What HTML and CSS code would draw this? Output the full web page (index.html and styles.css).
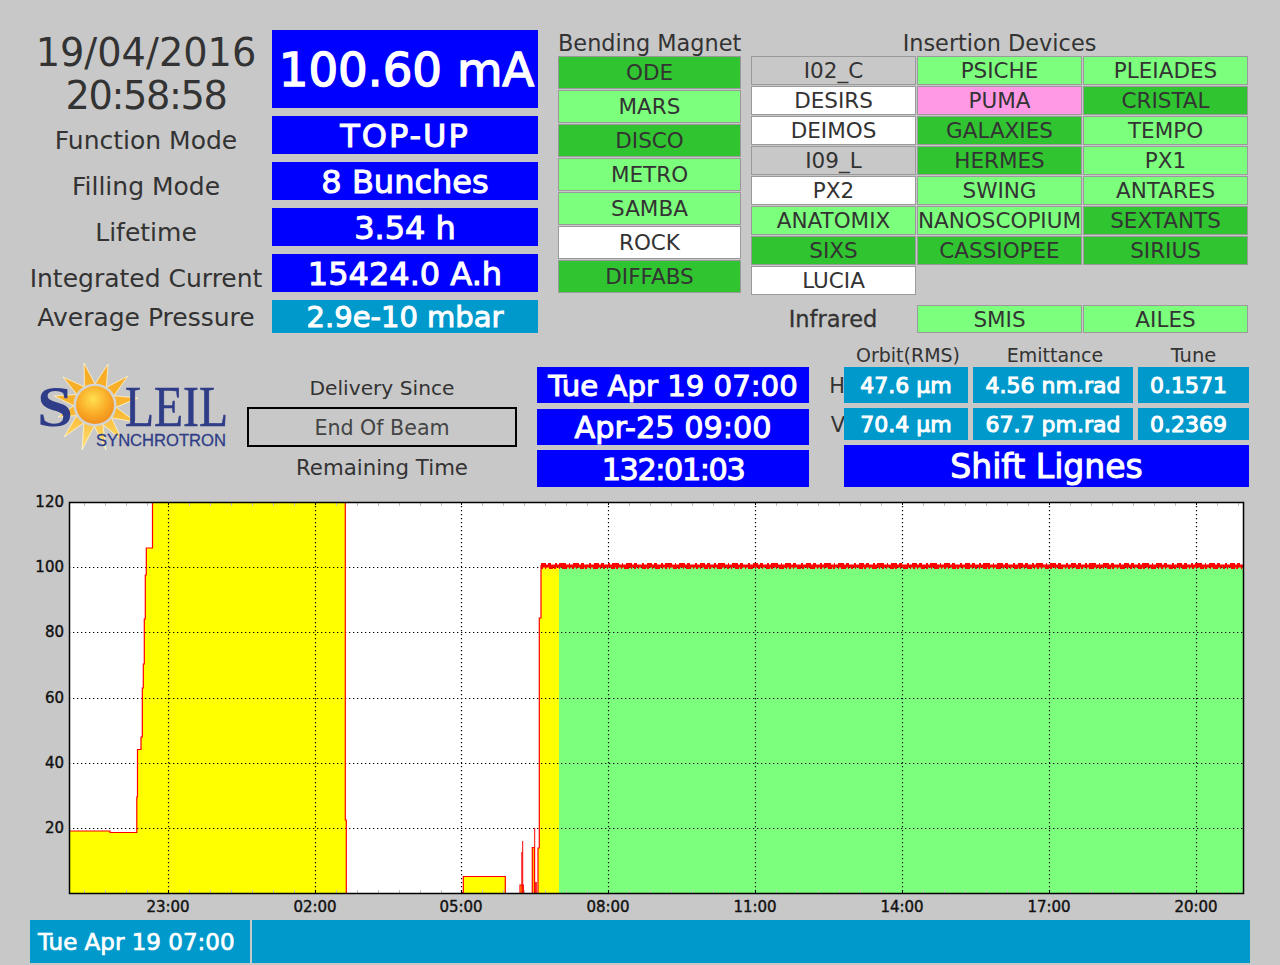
FILE: index.html
```html
<!DOCTYPE html>
<html lang="en">
<head>
<meta charset="utf-8">
<title>SOLEIL status</title>
<link rel="stylesheet" href="styles.css">
</head>
<body>
<main class="page">
  <section class="top">
    <div class="status">
      <div class="label clock"><span>19/04/2016</span><span class="clock-time">20:58:58</span></div>
      <div class="value beam">100.60 mA</div>
      <div class="label lower">Function Mode</div>
      <div class="value big wide">TOP-UP</div>
      <div class="label lower">Filling Mode</div>
      <div class="value big">8 Bunches</div>
      <div class="label lower">Lifetime</div>
      <div class="value big">3.54 h</div>
      <div class="label lower">Integrated Current</div>
      <div class="value big">15424.0 A.h</div>
      <div class="label low">Average Pressure</div>
      <div class="value pressure teal">2.9e-10 mbar</div>
    </div>
    <div class="bending">
      <div class="head">Bending Magnet</div>
      <div class="btn dark">ODE</div>
      <div class="btn light">MARS</div>
      <div class="btn dark">DISCO</div>
      <div class="btn light">METRO</div>
      <div class="btn light">SAMBA</div>
      <div class="btn white">ROCK</div>
      <div class="btn dark">DIFFABS</div>
    </div>
    <div class="insertion">
      <div class="head">Insertion Devices</div>
      <div class="idgrid">
        <div class="btn grey">I02_C</div>
        <div class="btn light">PSICHE</div>
        <div class="btn light">PLEIADES</div>
        <div class="btn white">DESIRS</div>
        <div class="btn pink">PUMA</div>
        <div class="btn dark">CRISTAL</div>
        <div class="btn white">DEIMOS</div>
        <div class="btn dark">GALAXIES</div>
        <div class="btn light">TEMPO</div>
        <div class="btn grey">I09_L</div>
        <div class="btn dark">HERMES</div>
        <div class="btn light">PX1</div>
        <div class="btn white">PX2</div>
        <div class="btn light">SWING</div>
        <div class="btn light">ANTARES</div>
        <div class="btn light">ANATOMIX</div>
        <div class="btn light">NANOSCOPIUM</div>
        <div class="btn dark">SEXTANTS</div>
        <div class="btn dark">SIXS</div>
        <div class="btn dark">CASSIOPEE</div>
        <div class="btn dark">SIRIUS</div>
        <div class="btn white">LUCIA</div>
      </div>
      <div class="irgrid">
        <div class="irlabel">Infrared</div>
        <div class="btn light">SMIS</div>
        <div class="btn light">AILES</div>
      </div>
    </div>
  </section>

  <section class="middle">
    <svg class="logo" viewBox="30 355 217 100" aria-label="SOLEIL Synchrotron">
      <defs>
        <radialGradient id="core" cx="0.45" cy="0.35" r="0.7">
          <stop offset="0" stop-color="#ffdf50"/>
          <stop offset="0.6" stop-color="#f9a825"/>
          <stop offset="1" stop-color="#ee8a1e"/>
        </radialGradient>
        <linearGradient id="rayfill" x1="0" y1="0" x2="0" y2="1">
          <stop offset="0" stop-color="#f8a924"/>
          <stop offset="0.55" stop-color="#f9b62e"/>
          <stop offset="1" stop-color="#fde27a"/>
        </linearGradient>
      </defs>
      <polygon class="rays" points="84,363 95,384 108,364 106.4,387.4 128,376 113.9,395.8 138,398 115.9,407.2 136,422 111.5,417.9 122,440 102.9,424.5 106,450 94.3,426 82,450 83.9,422.8 64,437 76.8,415.5 58,417 74,405.7 54,396 76.8,394.5 63,377 84.5,386.8"/>
      <circle class="ring" cx="95" cy="405" r="21.5"/>
      <circle class="sun" cx="95" cy="405" r="19"/>
      <text class="logo-s" x="37" y="426" textLength="36" lengthAdjust="spacingAndGlyphs">S</text>
      <text class="logo-l" x="125" y="426" textLength="103" lengthAdjust="spacingAndGlyphs">LEIL</text>
      <text class="logo-sub" x="96" y="446" textLength="130" lengthAdjust="spacingAndGlyphs">SYNCHROTRON</text>
    </svg>
    <div class="delivery">
      <div class="dlabel since">Delivery Since</div>
      <div class="dbox">End Of Beam</div>
      <div class="dlabel">Remaining Time</div>
    </div>
    <div class="times">
      <div class="value t1 t0">Tue Apr 19 07:00</div>
      <div class="value t1 t2">Apr-25 09:00</div>
      <div class="value t1 t3">132:01:03</div>
    </div>
    <div class="beamgrid">
      <div class="side"></div>
      <div class="chead cshift">Orbit(RMS)</div>
      <div class="chead cshift">Emittance</div>
      <div class="chead ctune">Tune</div>
      <div class="side">H</div>
      <div class="value m teal">47.6 µm</div>
      <div class="value m teal">4.56 nm.rad</div>
      <div class="value m teal tune">0.1571</div>
      <div class="side">V</div>
      <div class="value m teal">70.4 µm</div>
      <div class="value m teal">67.7 pm.rad</div>
      <div class="value m teal tune">0.2369</div>
      <div class="side"></div>
      <div class="value shift">Shift Lignes</div>
    </div>
  </section>

  <svg class="chart" viewBox="0 490 1280 430" aria-label="Beam current history">
    <rect class="plot" x="69.5" y="502.5" width="1174" height="391"/>
    <path class="yellow" d="M69.5 893V831H110V832.5H136.8V797H137.5V749.5H141V737H142.3V688H143.3V664H144.3V619H145.3V575H146.3V548H152.5V502.5H345.3V820H346.3V893ZM463.3 893V876.5H505.3V893ZM520 893V885H523.3V893ZM532.3 893V847.5H534.3V893ZM538 893V848H539.3V618H541V565H559V893Z"/>
    <path class="green" d="M559 566H1243V893H559Z"/>
    <g class="grid">
      <path d="M69 567.5H1244M69 632.5H1244M69 698.5H1244M69 763.5H1244M69 828.5H1244"/>
      <path d="M168.5 502V893M315.5 502V893M461.5 502V893M608.5 502V893M755.5 502V893M902.5 502V893M1049.5 502V893M1196.5 502V893"/>
    </g>
    <path class="minor" d="M84.5 503v3M105.5 503v3M126.5 503v3M147.5 503v3M189.5 503v3M210.5 503v3M231.5 503v3M252.5 503v3M273.5 503v3M294.5 503v3M336.5 503v3M357.5 503v3M378.5 503v3M399.5 503v3M420.5 503v3M441.5 503v3M482.5 503v3M503.5 503v3M524.5 503v3M545.5 503v3M566.5 503v3M587.5 503v3M629.5 503v3M650.5 503v3M671.5 503v3M692.5 503v3M713.5 503v3M734.5 503v3M776.5 503v3M797.5 503v3M818.5 503v3M839.5 503v3M860.5 503v3M881.5 503v3M923.5 503v3M944.5 503v3M965.5 503v3M986.5 503v3M1007.5 503v3M1028.5 503v3M1070.5 503v3M1091.5 503v3M1112.5 503v3M1133.5 503v3M1154.5 503v3M1175.5 503v3M1217.5 503v3M1238.5 503v3M84.5 890v3M105.5 890v3M126.5 890v3M147.5 890v3M189.5 890v3M210.5 890v3M231.5 890v3M252.5 890v3M273.5 890v3M294.5 890v3M336.5 890v3M357.5 890v3M378.5 890v3M399.5 890v3M420.5 890v3M441.5 890v3M482.5 890v3M503.5 890v3M524.5 890v3M545.5 890v3M566.5 890v3M587.5 890v3M629.5 890v3M650.5 890v3M671.5 890v3M692.5 890v3M713.5 890v3M734.5 890v3M776.5 890v3M797.5 890v3M818.5 890v3M839.5 890v3M860.5 890v3M881.5 890v3M923.5 890v3M944.5 890v3M965.5 890v3M986.5 890v3M1007.5 890v3M1028.5 890v3M1070.5 890v3M1091.5 890v3M1112.5 890v3M1133.5 890v3M1154.5 890v3M1175.5 890v3M1217.5 890v3M1238.5 890v3"/>
    <path class="trace" d="M69.5 831H110V832.5H136.8V797H137.5V749.5H141V737H142.3V688H143.3V664H144.3V619H145.3V575H146.3V548H152.5V502.5M345.3 502.5V820H346.3V893M461 892.5H463.3V876.5H505.3V893M520 893V885H523.3V893M532.3 893V847.5H534.3V893M538 893V848H539.3V618H541V565"/>
    <path class="spikes" d="M522.7 893V841M521.8 893V852M534.7 893V828M536.3 893V882M535.3 893V882"/>
    <g class="noise">
      <path class="n1" d="M541 566H1243"/>
      <path class="n2" d="M541 564H1243"/>
      <path class="n3" d="M541 568H1243"/>
    </g>
    <path class="tick" d="M168.5 502v3M315.5 502v3M461.5 502v3M608.5 502v3M755.5 502v3M902.5 502v3M1049.5 502v3M1196.5 502v3M168.5 890v3M315.5 890v3M461.5 890v3M608.5 890v3M755.5 890v3M902.5 890v3M1049.5 890v3M1196.5 890v3"/>
    <rect class="frame" x="69.5" y="502.5" width="1174" height="391"/>
    <g class="ylab">
      <text x="64" y="507">120</text>
      <text x="64" y="572">100</text>
      <text x="64" y="637">80</text>
      <text x="64" y="703">60</text>
      <text x="64" y="768">40</text>
      <text x="64" y="833">20</text>
    </g>
    <g class="xlab">
      <text x="168" y="912">23:00</text>
      <text x="315" y="912">02:00</text>
      <text x="461" y="912">05:00</text>
      <text x="608" y="912">08:00</text>
      <text x="755" y="912">11:00</text>
      <text x="902" y="912">14:00</text>
      <text x="1049" y="912">17:00</text>
      <text x="1196" y="912">20:00</text>
    </g>
  </svg>

  <footer class="foot">
    <div class="foot-date">Tue Apr 19 07:00</div>
    <div class="foot-msg"></div>
  </footer>
</main>
</body>
</html>
```
FILE: styles.css
```css
* { box-sizing: border-box; }
html, body { margin: 0; padding: 0; }
body {
  width: 1280px;
  height: 965px;
  overflow: hidden;
  background: #c8c8c8;
  color: #333;
  font-family: "DejaVu Sans", sans-serif;
}
.page { padding-top: 30px; }

.top { display: flex; height: 315px; padding-left: 30px; }
.status {
  width: 508px;
  display: grid;
  grid-template-columns: 232px 266px;
  column-gap: 10px;
  grid-template-rows: 78px 38px 38px 38px 38px 33px;
  row-gap: 8px;
  align-self: start;
}
.label {
  display: flex;
  align-items: center;
  justify-content: center;
  text-align: center;
  font-size: 25px;
  white-space: nowrap;
}
.lower { padding-top: 11px; }
.low { padding-top: 2px; }
.clock {
  flex-direction: column;
  font-size: 38.3px;
  line-height: 43px;
  padding-top: 10px;
}
.clock-time { letter-spacing: -1.4px; }
.value {
  display: flex;
  align-items: center;
  justify-content: center;
  background: #0000ff;
  color: #fff;
  -webkit-text-stroke: 1px #fff;
  white-space: nowrap;
}
.teal { background: #0099cc; }
.beam { font-size: 46.7px; -webkit-text-stroke: 1.4px #fff; padding: 2px 0 0 3px; }
.big { font-size: 32px; padding-top: 2px; }
.wide { letter-spacing: 2px; }
.pressure { font-size: 29px; }

.bending { width: 183px; margin-left: 20px; display: flex; flex-direction: column; gap: 1px; }
.head { height: 26px; font-size: 22.4px; line-height: 27px; text-align: center; white-space: nowrap; margin-bottom: -1px; }
.bending .btn { height: 33px; }
.btn {
  display: flex;
  align-items: center;
  justify-content: center;
  border: 1px solid #9a9a9a;
  font-size: 21.5px;
  white-space: nowrap;
}
.dark { background: #30c430; }
.light { background: #7cff7c; }
.white { background: #fff; }
.grey { background: #c8c8c8; }
.pink { background: #ff99e6; }

.insertion { width: 497px; margin-left: 10px; }
.idgrid {
  display: grid;
  grid-template-columns: repeat(3, 165px);
  grid-auto-rows: 29px;
  gap: 1px;
  margin-top: 1px;
}
.irgrid {
  display: grid;
  grid-template-columns: repeat(3, 165px);
  grid-auto-rows: 28px;
  gap: 1px;
  margin-top: 10px;
}
.irlabel {
  display: flex;
  align-items: center;
  justify-content: center;
  font-size: 22.5px;
  padding-right: 1px;
  -webkit-text-stroke: 0.3px #333;
}

.middle { display: flex; height: 142px; padding-left: 30px; }
.logo { width: 217px; height: 100px; margin-top: 10px; display: block; }
.rays { fill: url(#rayfill); stroke: #fff6d0; stroke-width: 0.8; }
.ring { fill: #d4d4d4; }
.sun { fill: url(#core); }
.logo-s { font-family: "Liberation Serif", serif; font-weight: bold; font-size: 58px; fill: #2f3c87; }
.logo-l { font-family: "Liberation Serif", serif; font-size: 56px; fill: #2f3c87; stroke: #2f3c87; stroke-width: 0.6; }
.logo-sub { font-family: "Liberation Sans", sans-serif; font-size: 17px; fill: #2f3c87; stroke: #2f3c87; stroke-width: 0.3; }

.delivery {
  width: 270px;
  margin-top: 22px;
  display: grid;
  grid-template-rows: 40px 40px 40px;
}
.dlabel { display: flex; align-items: center; justify-content: center; font-size: 21.3px; padding-top: 1px; }
.since { font-size: 20.2px; }
.dbox {
  display: flex;
  align-items: center;
  justify-content: center;
  border: 2px solid #000;
  font-size: 20.6px;
  color: #444;
  padding-top: 1px;
}
.times {
  width: 272px;
  margin: 22px 0 0 20px;
  display: grid;
  grid-template-rows: 36px 37px 37px;
  row-gap: 5px;
}
.t1 { font-size: 30.3px; padding-top: 1px; }
.t0 { font-size: 29.2px; }
.t2 { margin-top: 1px; }
.t3 { letter-spacing: -1.4px; padding-top: 2px; }
.beamgrid {
  width: 440px;
  display: grid;
  grid-template-columns: 30px 124px 160px 111px;
  grid-template-rows: 17px 36px 32px 42px;
  column-gap: 5px;
  row-gap: 5px;
}
.chead { font-size: 19px; line-height: 21px; text-align: center; white-space: nowrap; }
.cshift { padding-left: 4px; }
.ctune { font-size: 19.5px; }
.side { font-size: 21px; color: #333; display: flex; align-items: center; justify-content: flex-end; margin-right: -6px; padding-top: 1px; }
.m { font-size: 22px; padding-top: 1px; }
.tune { justify-content: flex-start; padding-left: 12px; }
.shift { grid-column: 2 / 5; font-size: 33px; }

.chart { display: block; width: 1280px; height: 430px; margin-top: 3px; }
.plot { fill: #fff; }
.yellow { fill: #ffff00; }
.green { fill: #7cff7c; }
.grid path { fill: none; stroke: #000; stroke-width: 1.2; stroke-dasharray: 1.3 2.7; }
.minor { stroke: #c0c0c0; stroke-width: 1; fill: none; }
.tick { stroke: #000; stroke-width: 1; fill: none; }
.trace { fill: none; stroke: #ff0000; stroke-width: 1.2; }
.spikes { fill: none; stroke: #ff0000; stroke-width: 1; }
.noise path { fill: none; stroke: #ff0000; }
.n1 { stroke-width: 3; }
.n2 { stroke-width: 2; stroke-dasharray: 5 2 3 4 2 2 7 3 1 3 6 2 3 5 2 3; }
.n3 { stroke-width: 2; stroke-dasharray: 2 2 1 3 4 1 2 3 1 2 5 2 1 2; }
.frame { fill: none; stroke: #000; stroke-width: 1.5; }
.ylab text, .xlab text {
  font-size: 15px;
  font-family: "DejaVu Sans", sans-serif;
  fill: #111;
  stroke: #111;
  stroke-width: 0.4;
}
.ylab text { text-anchor: end; }
.xlab text { text-anchor: middle; }

.foot {
  display: flex;
  gap: 2px;
  width: 1220px;
  height: 43px;
  margin-left: 30px;
}
.foot-date {
  width: 220px;
  background: #0099cc;
  color: #fff;
  font-size: 23px;
  -webkit-text-stroke: 0.7px #fff;
  padding-left: 8px;
  display: flex;
  align-items: center;
  white-space: nowrap;
}
.foot-msg { flex: 1; background: #0099cc; }
```
